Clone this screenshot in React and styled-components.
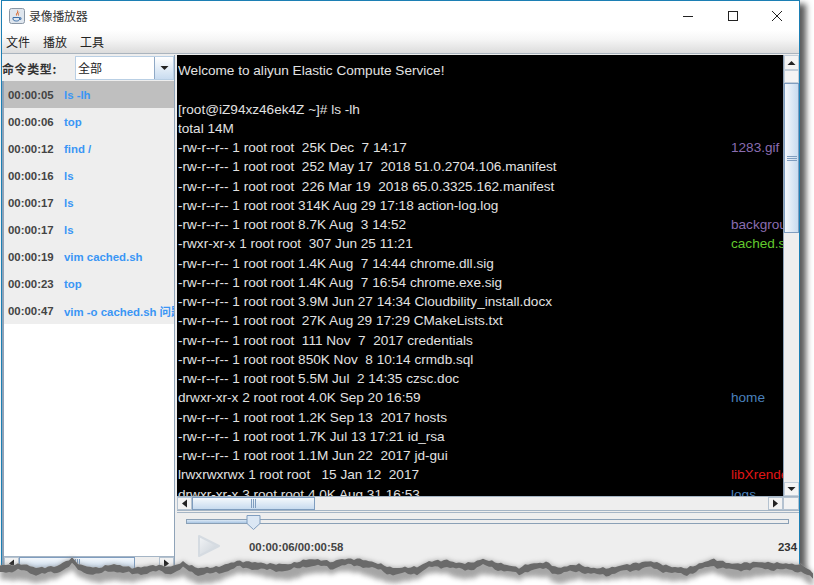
import React from "react";
import styled, { createGlobalStyle } from "styled-components";

const Global = createGlobalStyle`
  html, body { margin: 0; padding: 0; background: #fff; }
  body { width: 814px; height: 585px; overflow: hidden; font-family: "Liberation Sans", "Noto Sans CJK SC", sans-serif; }
`;
const Page = styled.div`position: relative; width: 814px; height: 585px; overflow: hidden; background: #fff;`;
const Win = styled.div`
  width: 797px; height: 570px; display: flex; flex-direction: column; background: #eee;
  border: 1px solid #1c7fb4; border-bottom: 0; box-shadow: 5px 5px 6px 1px rgba(50,50,50,.8); margin-left: 1px;
`;
const TitleBar = styled.div`height: 29px; flex: none; background: #fff; display: flex; align-items: center; padding-left: 7px;`;
const AppName = styled.span`font: 12px "Noto Sans CJK SC", sans-serif; color: #333; margin-left: 4px; flex: 1; letter-spacing: -.3px;`;
const WinBtn = styled.svg`width: 10px; height: 10px; margin-right: ${p => p.$gap}px; flex: none; fill: none; stroke: #222; stroke-width: 1;`;
const MenuBar = styled.div`
  height: 23px; flex: none; display: flex; align-items: center; gap: 13px; padding-left: 4px;
  background: linear-gradient(#fff 0%, #f6f6f6 40%, #dcdcdc 100%); border-bottom: 1px solid #aab4be;
  font: 12px "Noto Sans CJK SC", sans-serif; color: #222;
`;
const Split = styled.div`flex: 1; min-height: 0; display: flex; gap: 2px; background: #eee; padding: 1px 0 0 0;`;
const Left = styled.div`width: 172px; flex: none; display: flex; flex-direction: column; border-right: 1px solid #8fa3b8;`;
const ComboRow = styled.div`height: 26px; flex: none; display: flex; align-items: center; font: bold 12px "Noto Sans CJK SC", sans-serif; color: #333;`;
const ComboLabel = styled.span`width: 73px; flex: none; letter-spacing: .6px; white-space: nowrap;`;
const Combo = styled.div`flex: 1; height: 24px; box-sizing: border-box; display: flex; border: 1px solid #b9cfe4; background: #fff;`;
const ComboValue = styled.span`flex: 1; padding-left: 2px; line-height: 22px; font-weight: 400; color: #222;`;
const ComboArrow = styled.div`width: 18px; display: flex; align-items: center; justify-content: center; border-left: 1px solid #8fa9c6; background: linear-gradient(#fff, #c9dcf0);`;
const List = styled.div`flex: 1; min-height: 0; background: #fff; border-left: 2px solid #8fa3b8; display: flex; flex-direction: column;`;
const Row = styled.div`
  height: 27px; flex: none; display: flex; align-items: center; padding-left: 4px; overflow: hidden; white-space: nowrap;
  background: ${p => (p.$sel ? "#bfbfbf" : "#eee")}; font: bold 11.4px "Liberation Sans", "Noto Sans CJK SC", sans-serif;
`;
const Time = styled.span`width: 56px; flex: none; color: #444;`;
const Cmd = styled.span`color: #3a96f5;`;
const HBar = styled.div`height: 15px; flex: none; display: flex; background: #eee; border-top: 1px solid #a5b5c5; border-bottom: 1px solid #a5b5c5; box-sizing: border-box;`;
const SBtn = styled.div`width: ${p => p.$w || 15}px; flex: none; display: flex; align-items: center; justify-content: center; background: #f2f2f2; box-sizing: border-box; border: 1px solid #b4c2d0;`;
const HThumb = styled.div`
  width: ${p => p.$w}px; flex: none; display: flex; align-items: center; justify-content: center; box-sizing: border-box;
  border: 1px solid #7f9dbf; background: linear-gradient(#f4f8fc, #c8dbef);
`;
const Spacer = styled.div`flex: 1;`;
const Right = styled.div`flex: 1; min-width: 0; display: flex; flex-direction: column;`;
const TermWrap = styled.div`height: 441px; flex: none; display: flex;`;
const Term = styled.div`
  flex: 1; min-width: 0; background: #000; overflow: hidden; padding: 6px 0 0 1px; box-sizing: border-box;
  font: 13.6px/19.25px "Liberation Sans", sans-serif; color: #e2e2e2; white-space: pre;
`;
const Line = styled.div`height: 19.25px; display: grid; grid-template-columns: 553px 1fr; overflow: hidden;`;
const Side = styled.span`color: ${p => p.$c}; overflow: hidden;`;
const VBar = styled.div`width: 16px; flex: none; display: flex; flex-direction: column; background: #eee; border-left: 1px solid #8fa3b8; box-sizing: border-box;`;
const VBtn = styled.div`height: ${p => p.$h}px; flex: none; display: flex; align-items: center; justify-content: center; background: #f4f4f4; border: 1px solid #c3ced9; box-sizing: border-box;`;
const VThumb = styled.div`height: 150px; flex: none; display: flex; align-items: center; justify-content: center; box-sizing: border-box; border: 1px solid #7f9dbf; background: linear-gradient(90deg, #f4f8fc, #c8dbef);`;
const Controls = styled.div`flex: 1; border-top: 1px solid #a5b5c5; margin-top: 1px; padding: 6px 10px 0 9px; display: flex; flex-direction: column;`;
const Track = styled.div`position: relative; height: 5px; background: #eee; border: 1px solid #8aa0b6; box-sizing: border-box;`;
const TrackFill = styled.div`height: 100%; width: 11%; background: linear-gradient(#dbe8f5, #a9c6e4);`;
const Knob = styled.svg`position: absolute; left: 59px; top: -6px; width: 15px; height: 17px;`;
const PlayRow = styled.div`display: flex; align-items: center; margin-top: 10px; padding-left: 11px;`;
const TimeLabel = styled.span`margin: 2px 0 0 28px; flex: 1; font: bold 11.4px "Liberation Sans", sans-serif; color: #444;`;
const Count = styled.span`margin: 2px -8px 0 0; font: bold 11.4px "Liberation Sans", sans-serif; color: #333;`;
const Tear = styled.svg`position: absolute; left: 0; top: 545px; width: 814px; height: 40px;`;

const lines = [
  ["Welcome to aliyun Elastic Compute Service!"], [""], ["[root@iZ94xz46ek4Z ~]# ls -lh"], ["total 14M"],
  ["-rw-r--r-- 1 root root  25K Dec  7 14:17", "1283.gif", "#8a6db0"],
  ["-rw-r--r-- 1 root root  252 May 17  2018 51.0.2704.106.manifest"],
  ["-rw-r--r-- 1 root root  226 Mar 19  2018 65.0.3325.162.manifest"],
  ["-rw-r--r-- 1 root root 314K Aug 29 17:18 action-log.log"],
  ["-rw-r--r-- 1 root root 8.7K Aug  3 14:52", "background.png", "#8a6db0"],
  ["-rwxr-xr-x 1 root root  307 Jun 25 11:21", "cached.sh", "#62c92e"],
  ["-rw-r--r-- 1 root root 1.4K Aug  7 14:44 chrome.dll.sig"],
  ["-rw-r--r-- 1 root root 1.4K Aug  7 16:54 chrome.exe.sig"],
  ["-rw-r--r-- 1 root root 3.9M Jun 27 14:34 Cloudbility_install.docx"],
  ["-rw-r--r-- 1 root root  27K Aug 29 17:29 CMakeLists.txt"],
  ["-rw-r--r-- 1 root root  111 Nov  7  2017 credentials"],
  ["-rw-r--r-- 1 root root 850K Nov  8 10:14 crmdb.sql"],
  ["-rw-r--r-- 1 root root 5.5M Jul  2 14:35 czsc.doc"],
  ["drwxr-xr-x 2 root root 4.0K Sep 20 16:59", "home", "#4a80bd"],
  ["-rw-r--r-- 1 root root 1.2K Sep 13  2017 hosts"],
  ["-rw-r--r-- 1 root root 1.7K Jul 13 17:21 id_rsa"],
  ["-rw-r--r-- 1 root root 1.1M Jun 22  2017 jd-gui"],
  ["lrwxrwxrwx 1 root root   15 Jan 12  2017", "libXrender.so", "#e01515"],
  ["drwxr-xr-x 3 root root 4.0K Aug 31 16:53", "logs", "#4a80bd"],
];
const rows = [["00:00:05", "ls -lh"], ["00:00:06", "top"], ["00:00:12", "find /"], ["00:00:16", "ls"], ["00:00:17", "ls"], ["00:00:17", "ls"], ["00:00:19", "vim cached.sh"], ["00:00:23", "top"], ["00:00:47", "vim -o cached.sh 问题"]];

const Tri = ({ d }) => {
  const p = { l: "6,0 1,4 6,8", r: "1,0 6,4 1,8", u: "0,5 4,1 8,5", d: "0,1 4,5 8,1" }[d];
  const horizontal = d === "l" || d === "r";
  return <svg width={horizontal ? 7 : 9} height={horizontal ? 9 : 6} viewBox={horizontal ? "0 0 7 8" : "0 0 8 6"}><polygon points={p} fill="#222" /></svg>;
};
const Grip = ({ v }) => v
  ? <svg width="10" height="5"><path d="M0 .5H10M0 2.5H10M0 4.5H10" stroke="#7f9dbf" /></svg>
  : <svg width="5" height="9"><path d="M.5 0V9M2.5 0V9M4.5 0V9" stroke="#7f9dbf" /></svg>;

/* torn-paper profile, read from the reference: [x, page y of the top of the tear] */
const profile = [
  [0, 565], [10, 565], [23, 564], [37, 568], [57, 566], [72, 558], [80, 565], [97, 568], [113, 564], [133, 568],
  [157, 565], [170, 567], [183, 562], [197, 568], [217, 567], [237, 561], [253, 562], [270, 564], [290, 564],
  [308, 559], [323, 560], [333, 562], [340, 559], [360, 559], [377, 563], [393, 568], [417, 567], [430, 561],
  [447, 560], [457, 563], [470, 563], [483, 559], [503, 564], [520, 568], [527, 564], [540, 563], [547, 562],
  [557, 568], [578, 564], [590, 568], [610, 568], [623, 565], [650, 561], [673, 567], [687, 568], [713, 559],
  [733, 564], [743, 563], [757, 562], [780, 563], [803, 565], [814, 574],
];
function tearAt(x) {
  let i = 0;
  while (i < profile.length - 2 && profile[i + 1][0] < x) i++;
  const [x0, y0] = profile[i];
  const [x1, y1] = profile[i + 1];
  const base = y0 + ((x - x0) / (x1 - x0)) * (y1 - y0);
  return base - 545 + Math.sin(x * 1.3) * .6 + Math.sin(x * .57 + 1) * .5;
}
const edge = [];
for (let x = 0; x <= 814; x += 3) edge.push([x, tearAt(x)]);
const top = edge.map(([x, y]) => `${x},${y.toFixed(1)}`).join(" ");
const band = [...edge].reverse().map(([x, y]) => `${x},${(y + 6.5 + Math.sin(x * .23) * 1.2).toFixed(1)}`).join(" ");
const soft = [...edge].reverse().map(([x, y]) => `${x},${(y + 14 + Math.sin(x * .07) * 2).toFixed(1)}`).join(" ");

export default function App() {
  return (
    <Page>
      <Global />
      <Win>
        <TitleBar>
          <svg width="16" height="16" viewBox="0 0 16 16">
            <rect x=".5" y=".5" width="15" height="15" rx="2" fill="#dfe6ee" stroke="#8b97a5" />
            <path d="M8.5 2.5C10 4.5 6.5 5.5 7.5 7.5M10 4.5C8.5 5.5 9.5 6.5 9.5 7.5" fill="none" stroke="#d9662a" strokeWidth="1" />
            <path d="M4 9.5H10.5V11C10.5 12.5 9 13 7.5 13S4 12.5 4 11ZM10.5 9.8H12V11.3H10.5" fill="none" stroke="#3c6fa8" strokeWidth="1" />
          </svg>
          <AppName>录像播放器</AppName>
          <WinBtn $gap={35} viewBox="0 0 10 10"><path d="M0 5.5H10" /></WinBtn>
          <WinBtn $gap={34} viewBox="0 0 10 10"><rect x=".5" y=".5" width="9" height="9" /></WinBtn>
          <WinBtn $gap={17} viewBox="0 0 10 10"><path d="M0 0L10 10M10 0L0 10" /></WinBtn>
        </TitleBar>
        <MenuBar><span>文件</span><span>播放</span><span>工具</span></MenuBar>
        <Split>
          <Left>
            <ComboRow>
              <ComboLabel>命令类型:</ComboLabel>
              <Combo><ComboValue>全部</ComboValue><ComboArrow><Tri d="d" /></ComboArrow></Combo>
            </ComboRow>
            <List>
              {rows.map(([t, c], i) => <Row key={i} $sel={i === 0}><Time>{t}</Time><Cmd>{c}</Cmd></Row>)}
              <Spacer />
              <HBar>
                <SBtn><Tri d="l" /></SBtn>
                <HThumb $w={116}><Grip /></HThumb>
                <Spacer />
                <SBtn><Tri d="r" /></SBtn>
              </HBar>
            </List>
          </Left>
          <Right>
            <TermWrap>
              <Term>
                {lines.map(([a, b, c], i) => <Line key={i}><span>{a}</span>{b && <Side $c={c}>{b}</Side>}</Line>)}
              </Term>
              <VBar>
                <VBtn $h={15}><Tri d="u" /></VBtn>
                <VBtn $h={13} />
                <VThumb><Grip v /></VThumb>
                <Spacer />
                <VBtn $h={14}><Tri d="d" /></VBtn>
              </VBar>
            </TermWrap>
            <HBar>
              <SBtn><Tri d="l" /></SBtn>
              <HThumb $w={123}><Grip /></HThumb>
              <Spacer />
              <SBtn><Tri d="r" /></SBtn>
              <SBtn $w={16} />
            </HBar>
            <Controls>
              <Track>
                <TrackFill />
                <Knob viewBox="0 0 15 17"><path d="M1 1.5H14V9.5L7.5 15.5L1 9.5Z" fill="#dbe7f4" stroke="#7f9dbf" /></Knob>
              </Track>
              <PlayRow>
                <svg width="24" height="24" viewBox="0 0 24 24">
                  <defs><linearGradient id="pg" x1="0" y1="0" x2="1" y2="1"><stop offset="0" stopColor="#f3f5f7" /><stop offset="1" stopColor="#c7ced6" /></linearGradient></defs>
                  <path d="M2 2L22 12L2 22Z" fill="url(#pg)" stroke="#d5dbe1" strokeLinejoin="round" strokeWidth="2" />
                </svg>
                <TimeLabel>00:00:06/00:00:58</TimeLabel>
                <Count>234</Count>
              </PlayRow>
            </Controls>
          </Right>
        </Split>
      </Win>
      <Tear viewBox="0 0 814 40">
        <defs>
          <filter id="b1" x="-2%" y="-30%" width="104%" height="160%"><feGaussianBlur stdDeviation=".5" /></filter>
          <filter id="b2" x="-2%" y="-50%" width="104%" height="200%"><feGaussianBlur stdDeviation="2.5" /></filter>
        </defs>
        <polygon points={`0,40 ${top} 814,40`} fill="#fff" />
        <polygon points={`${top} ${soft}`} fill="#808080" opacity=".7" filter="url(#b2)" />
        <polygon points={`${top} ${band}`} fill="#6a6a6a" filter="url(#b1)" />
      </Tear>
    </Page>
  );
}
